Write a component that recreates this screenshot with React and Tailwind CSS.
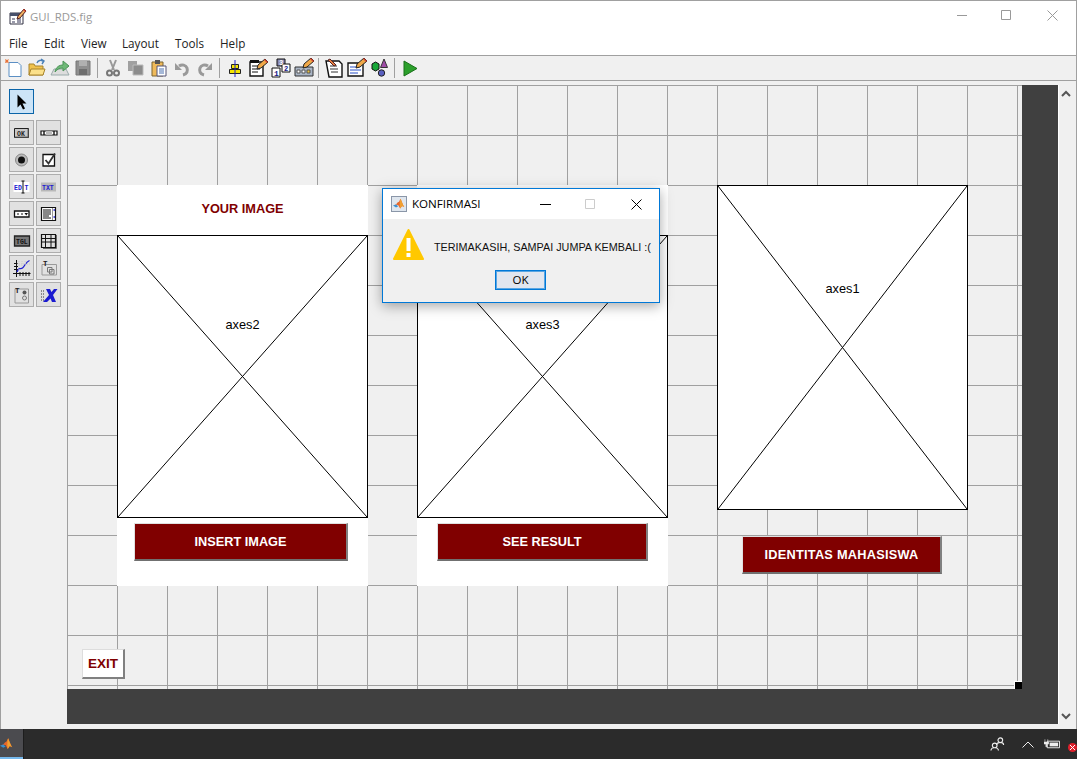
import React from 'react';

const ui = { fontFamily: '"Open Sans", sans-serif' };
const arial = { fontFamily: '"Liberation Sans", Arial, sans-serif' };
const mono = { fontFamily: '"Liberation Mono", monospace', fontWeight: 700 };

const menus = [
  { label: 'File', w: 'w-[35px]' },
  { label: 'Edit', w: 'w-[37px]' },
  { label: 'View', w: 'w-[41px]' },
  { label: 'Layout', w: 'w-[53px]' },
  { label: 'Tools', w: 'w-[45px]' },
  { label: 'Help', w: 'w-[30px]' },
];

function Ico({ children, size = 20, box = 20 }) {
  return (
    <svg width={size} height={size} viewBox={`0 0 ${box} ${box}`} className="block">
      {children}
    </svg>
  );
}

const Pencil = ({ x = 0, y = 0 }) => (
  <g transform={`translate(${x} ${y})`}>
    <path d="M0 10l1-4 7-6 3 3-7 6z" fill="#f0a848" stroke="#222" strokeWidth="1" />
    <path d="M7 1l3 3 1-1-3-3z" fill="#d04030" />
  </g>
);

const toolbar = [
  // new file
  <Ico key="new"><path d="M5 4.500h9l3 3v11H5z" fill="#fff" stroke="#5b8fc4" /><path d="M1 1l2 1 2-1-1 2 1 2-2-.6L1 5l.6-2z" fill="#e8743a" /></Ico>,
  // open
  <Ico key="open"><path d="M2 6h5l1 2h8v9H2z" fill="#f0c24e" stroke="#a8842c" /><path d="M2 17l2-6h14l-2 6z" fill="#fbe08a" stroke="#a8842c" /><path d="M10 5c1-3 4-3 6-2M14 1l3 2-2 3" fill="none" stroke="#4a80b8" strokeWidth="1.400" /></Ico>,
  // export
  <Ico key="export"><path d="M1 17l3-6h12l3 6z" fill="#ddd" stroke="#9aa" /><path d="M5 14c1-5 4-7 8-7V3l6 5-6 5V10c-3 0-6 1-8 4z" fill="#6fb878" stroke="#4d9558" /></Ico>,
  // save, greyed out
  <Ico key="save"><path d="M3 3h14v14H3z" fill="#8f8f8f" stroke="#777" /><path d="M6 3h8v5H6z" fill="#b0b0b0" /><path d="M6 11h8v6H6z" fill="#6e6e6e" /></Ico>,
  'sep',
  // cut
  <Ico key="cut"><path d="M7 2l4 10M13 2L9 12" stroke="#999" strokeWidth="2" /><circle cx="6.500" cy="15" r="2.500" fill="none" stroke="#777" strokeWidth="2" /><circle cx="13.500" cy="15" r="2.500" fill="none" stroke="#777" strokeWidth="2" /></Ico>,
  // copy
  <Ico key="copy"><path d="M2 3h9v10H2z" fill="#a0a0a0" /><path d="M7 7h10v10H7z" fill="#8c8c8c" stroke="#bbb" /></Ico>,
  // paste
  <Ico key="paste"><path d="M3 4h11v14H3z" fill="#efba5a" stroke="#7a6530" /><path d="M6 2h5v4H6z" fill="#555" /><path d="M8 8h9v10H8z" fill="#fff" stroke="#557" /><path d="M10 11h5M10 13h5M10 15h5" stroke="#4a70b0" /></Ico>,
  // undo
  <Ico key="undo"><path d="M11 17c4-1 5-4 4-7-1-3-5-4-8-2" fill="none" stroke="#999" strokeWidth="3" /><path d="M3 5v7h7z" fill="#999" /></Ico>,
  // redo
  <Ico key="redo"><path d="M9 17c-4-1-5-4-4-7 1-3 5-4 8-2" fill="none" stroke="#999" strokeWidth="3" /><path d="M17 5v7h-7z" fill="#999" /></Ico>,
  'sep',
  // align
  <Ico key="align"><path d="M6.500 6.500h7v4h-7zM4.500 11.500h11v4h-11z" fill="#f5e500" stroke="#222" /><path d="M10 2v17" stroke="#2222c8" /></Ico>,
  // menu editor
  <Ico key="menu"><path d="M2 4h13v14H2z" fill="#fff" stroke="#111" strokeWidth="1.400" /><path d="M2 2h9v3H2z" fill="#111" /><path d="M4 8h8M4 11h8M4 14h6" stroke="#111" /><Pencil x={9} y={1} /></Ico>,
  // tab order
  <Ico key="tab"><path d="M6 1h8v7H6z" fill="#8c8cb4" stroke="#111" /><path d="M1 10h8v9H1z" fill="#fff" stroke="#111" /><path d="M11 6h8v8h-8z" fill="#fff" stroke="#111" /><text x="8" y="7" fontSize="7" fill="#fff" style={mono}>3</text><text x="3" y="18" fontSize="8" fill="#1a1a8c" style={mono}>1</text><text x="13" y="13" fontSize="7" fill="#1a1a8c" style={mono}>2</text></Ico>,
  // toolbar editor
  <Ico key="tbar"><path d="M1 9h18v9H1z" fill="#a9b4c4" stroke="#333" /><path d="M3 12h3v3H3zM8 12h3v3H8z" fill="#fff" stroke="#555" /><path d="M13 12h3v3h-3z" fill="#e8c040" stroke="#555" /><Pencil x={9} y={0} /></Ico>,
  'sep',
  // m-file editor
  <Ico key="edit"><path d="M2 3h13l3 3v13H5z" fill="#fff" stroke="#111" strokeWidth="1.400" /><path d="M6 8h7M6 11h8M7 14h7" stroke="#333" /><path d="M4 2l6 6 2-1-6-6z" fill="#e88040" stroke="#522" /></Ico>,
  // property inspector
  <Ico key="prop"><path d="M1 5h15v13H1z" fill="#fff" stroke="#111" strokeWidth="1.400" /><path d="M3 9h9M3 12h11M3 15h8" stroke="#2a50c8" /><Pencil x={9} y={0} /></Ico>,
  // object browser
  <Ico key="obj"><path d="M2 6l3.500-2L9 6v5l-3.500 2L2 11z" fill="#18a838" stroke="#111" /><path d="M14 1l3.500 8.500h-7z" fill="#a04ca8" stroke="#333" /><circle cx="11.500" cy="15" r="3.200" fill="#5a60c0" stroke="#222" /></Ico>,
  'sep',
  // run
  <Ico key="run"><path d="M4 3l13 7.500L4 18z" fill="#2ca02c" stroke="#187018" /></Ico>,
];

const label = (txt, x, y, size, fill) => (
  <text x={x} y={y} fontSize={size} fill={fill} style={mono}>{txt}</text>
);

const palette = [
  <Ico key="ok"><path d="M2.500 5.500h14v9h-14z" fill="#c8c8c8" stroke="#222" /><path d="M3 14h13M16 6v8" stroke="#666" />{label('OK', 5, 12.500, 6.500, '#222')}</Ico>,
  <Ico key="slider"><path d="M2 8h16v4H2z" fill="#fff" stroke="#111" strokeWidth="1.200" /><path d="M7 8h6v4H7z" fill="#bbb" /><path d="M5 8v4M15 8v4" stroke="#111" strokeWidth="1.400" /></Ico>,
  <Ico key="radio"><circle cx="9.500" cy="10" r="6" fill="#bbb" stroke="#888" /><circle cx="9.500" cy="10" r="3.500" fill="#111" /></Ico>,
  <Ico key="check"><path d="M4 4.500h11.500V16H4z" fill="#fff" stroke="#111" strokeWidth="1.300" /><path d="M6.500 10l3 3.500L16 3.500" fill="none" stroke="#333" strokeWidth="1.800" /></Ico>,
  <Ico key="edit"><path d="M1.500 5h16v10h-16z" fill="#fff" />{label('ED', 2, 12.500, 6.500, '#2020d0')}{label('T', 12.500, 12.500, 6.500, '#2020d0')}<path d="M9.500 4h3M9.500 16h3M11 4v12" stroke="#111" /></Ico>,
  <Ico key="txt"><path d="M2 5.500h15v9H2z" fill="#b8b8b8" />{label('TXT', 3, 12.500, 6.500, '#2020d0')}</Ico>,
  <Ico key="popup"><path d="M2.500 7h14.500v6H2.500z" fill="#fff" stroke="#111" strokeWidth="1.300" /><path d="M5 10h2M9 10h2" stroke="#111" /><path d="M12.500 9h3.500l-1.700 2.500z" fill="#111" /></Ico>,
  <Ico key="list"><path d="M2.500 3.500h14v13h-14z" fill="#fff" stroke="#111" strokeWidth="1.200" /><path d="M4 6h8M4 8h8M4 10h8M4 12h6M4 14h8" stroke="#111" /><path d="M13.500 4v12" stroke="#999" /><path d="M14.500 6h1.500M14.500 13h1.500" stroke="#2020d0" strokeWidth="1.500" /></Ico>,
  <Ico key="tgl"><path d="M2.500 5h15v10h-15z" fill="#777" stroke="#222" strokeWidth="1.300" />{label('TGL', 4, 12.500, 6.500, '#111')}</Ico>,
  <Ico key="table"><path d="M2.500 3.500h14v13h-14z" fill="#e0e0e0" stroke="#111" strokeWidth="1.200" /><path d="M3 7.500h13M3 11h13M6.500 4v12M12 4v12" stroke="#111" /><path d="M17.500 4v13.500H4" fill="none" stroke="#666" /></Ico>,
  <Ico key="axes"><path d="M4.500 2v17M1 15.500h17.500M8 14v4M11 14v4M14 14v4M17 14v4M2 5.500h4M2 8.500h4M2 11.500h4" stroke="#111" strokeWidth="1" /><path d="M5 14c2-6 3-2 5.500-4s3-6 7-7.500" fill="none" stroke="#2020d0" strokeWidth="1.300" /><path d="M7 3v10M10 3v6M13 3v4M5 6h13" stroke="#ccc" strokeDasharray="1 1" /></Ico>,
  <Ico key="panel"><path d="M3 6.500h14.500V17H3z" fill="none" stroke="#999" />{label('T', 4, 7.500, 7.500, '#222')}<path d="M8.500 9.500h4.500V14H8.500zM10.500 11.500h4.500V16h-4.500z" fill="none" stroke="#777" /></Ico>,
  <Ico key="group"><path d="M3 4h13.500v14H3z" fill="none" stroke="#999" />{label('T', 3, 8, 7.500, '#222')}<circle cx="12.500" cy="7.500" r="2" fill="#555" /><circle cx="12.500" cy="13" r="2" fill="#ddd" stroke="#777" /></Ico>,
  <Ico key="activex"><path d="M2 6h4M2 9h3M2 12h3M2 15h3" stroke="#333" strokeDasharray="1 1" /><path d="M7 4h4l1.500 3L15 4h3.500l-4.500 6 3 7h-4l-1.500-3.500L8 17H4l6-7z" fill="#1a1ad0" /></Ico>,
];

function Axes({ name, labelTop, className }) {
  return (
    <div className={`relative border border-black bg-white ${className}`}>
      <svg className="block h-full w-full" viewBox="0 0 100 100" preserveAspectRatio="none">
        <path d="M0 0L100 100M100 0L0 100" stroke="#000" strokeWidth="1" vectorEffect="non-scaling-stroke" />
      </svg>
      <span className={`absolute left-0 right-0 text-center text-[12.75px] leading-4 text-black ${labelTop}`} style={arial}>{name}</span>
    </div>
  );
}

function MaroonButton({ children, className }) {
  return (
    <div
      className={`flex h-[38px] items-center justify-center border border-r-2 border-b-2 border-t-[#e0e0e0] border-l-[#e0e0e0] border-r-[#808080] border-b-[#707070] bg-[#800000] text-[12.75px] font-bold text-white ${className}`}
      style={arial}
    >
      {children}
    </div>
  );
}

function MatlabLogo({ size }) {
  return (
    <svg width={size} height={size} viewBox="0 0 16 16" className="block">
      <path d="M0 10l4-1.500L6 6l2-1 2-4c1 2 3 8 5 11l-3-1.500L9.500 14 7 9.500 5 9z" fill="#e8662a" />
      <path d="M0 10l4-1.500L7 11 4 12.500z" fill="#3a8fd0" />
      <path d="M10 1c-1 3-1.500 8-.5 13l2.500-3.500L15 12c-2-3-4-9-5-11z" fill="#f0a030" />
    </svg>
  );
}

export default function App() {
  return (
    <div className="flex h-[759px] w-[1077px] flex-col overflow-hidden bg-[#2b2b2b]" style={ui}>
      {/* Window */}
      <div className="flex h-[729px] flex-col border-x border-t border-[#a0a0a0] bg-[#f0f0f0]">
        {/* Title bar */}
        <div className="flex h-[29px] items-center bg-white pl-[8px]">
          <svg width="18" height="18" viewBox="0 0 18 18" className="block">
            <path d="M1 6h13v11H1z" fill="#fff" stroke="#334" />
            <path d="M1 6h13v3H1z" fill="#47506a" />
            <path d="M3 11h3v2H3zM3 14h3v2H3zM8 11h4v5H8z" fill="#99a" />
            <path d="M9 9l6-7 2 2-6 7-3 1z" fill="#f0b060" stroke="#522" />
            <path d="M14.500 2.500l2 2" stroke="#d04030" strokeWidth="1.500" />
          </svg>
          <span className="ml-[3px] pt-[2px] text-[11.4px] text-[#999]">GUI_RDS.fig</span>
          <div className="ml-auto flex items-center pr-[18px]">
            <svg width="11" height="11" viewBox="0 0 11 11" className="block"><path d="M1 5.500h10" stroke="#999" /></svg>
            <svg width="11" height="11" viewBox="0 0 11 11" className="ml-[34px] block"><path d="M.5.500h9v9h-9z" fill="none" stroke="#999" /></svg>
            <svg width="11" height="11" viewBox="0 0 11 11" className="ml-[35px] block"><path d="M.5.500l10 10M10.500.500l-10 10" stroke="#999" /></svg>
          </div>
        </div>
        {/* Menu bar */}
        <div className="flex h-[26px] items-center border-b border-[#a0a0a0] bg-white pl-[8px] pt-[2px] text-[11.7px] text-[#222]">
          {menus.map((m) => (
            <span key={m.label} className={m.w}>{m.label}</span>
          ))}
        </div>
        {/* Toolbar */}
        <div className="flex h-[25px] items-center border-b border-[#a0a0a0] pl-[1px]">
          {toolbar.map((item, i) =>
            item === 'sep' ? (
              <div key={i} className="mx-[3px] h-[20px] w-px bg-[#a0a0a0]" />
            ) : (
              <div key={i} className="flex w-[23px] justify-center">{item}</div>
            )
          )}
        </div>
        {/* Body */}
        <div className="flex flex-1 pt-[4px]">
          {/* Component palette */}
          <div className="w-[66px] pl-[8px] pt-[4px]">
            <div className="flex h-[25px] w-[25px] items-center justify-center border border-[#0a64a8] bg-[#cce4f7]">
              <svg width="18" height="18" viewBox="0 0 18 18" className="block"><path d="M4.500 1.500v13l3-3 2.500 5 2-1-2.500-5h4z" fill="#000" /></svg>
            </div>
            <div className="mt-[6px] grid grid-cols-[25px_25px] gap-x-[2px] gap-y-[2px]">
              {palette.map((icon, i) => (
                <div key={i} className="flex h-[25px] w-[25px] items-center justify-center border border-[#adadad] bg-[#e1e1e1]">
                  {icon}
                </div>
              ))}
            </div>
          </div>
          {/* Layout area */}
          <div className="flex w-[991px] flex-col bg-[#404040]">
            <div className="relative h-[604px] w-[955px] border-0 bg-[#f0f0f0] bg-[linear-gradient(#a0a0a0_1px,transparent_1px),linear-gradient(90deg,#a0a0a0_1px,transparent_1px)] bg-[size:50px_50px]">
              {/* Left panel */}
              <div className="absolute left-[50px] top-[100px] flex h-[401px] w-[251px] flex-col bg-white">
                <div className="flex h-[50px] items-center justify-center pb-[2px] text-[12.75px] font-bold text-[#800000]" style={arial}>YOUR IMAGE</div>
                <Axes name="axes2" labelTop="top-[81px]" className="h-[283px] w-[251px]" />
                <MaroonButton className="ml-[17px] mt-[5px] w-[214px]">INSERT IMAGE</MaroonButton>
              </div>
              {/* Middle panel */}
              <div className="absolute left-[350px] top-[100px] flex h-[401px] w-[251px] flex-col bg-white">
                <div className="h-[50px]" />
                <Axes name="axes3" labelTop="top-[81px]" className="h-[283px] w-[251px]" />
                <MaroonButton className="ml-[20px] mt-[5px] w-[211px]">SEE RESULT</MaroonButton>
              </div>
              {/* Right column */}
              <Axes name="axes1" labelTop="top-[95px]" className="absolute left-[650px] top-[100px] h-[325px] w-[251px]" />
              <MaroonButton className="absolute left-[675px] top-[451px] w-[200px] tracking-[0.25px]">IDENTITAS MAHASISWA</MaroonButton>
              {/* Exit */}
              <div
                className="absolute left-[15px] top-[564px] flex h-[30px] w-[43px] items-center justify-center border border-r-2 border-b-2 border-t-[#ddd] border-l-[#ddd] border-r-[#808080] border-b-[#808080] bg-white pt-[1px] text-[13.5px] font-bold text-[#800000]"
                style={arial}
              >
                EXIT
              </div>
              {/* Resize handle */}
              <div className="absolute bottom-0 right-0 h-[8px] w-[8px] border-l border-t border-white bg-black" />
              {/* Dialog */}
              <div className="absolute left-[315px] top-[103px] h-[115px] w-[278px] border border-[#0078d7] bg-[#f0f0f0] shadow-[0_3px_12px_rgba(0,0,0,0.35)]" style={arial}>
                <div className="flex h-[30px] items-center bg-white pl-[8px]">
                  <div className="flex h-[16px] w-[16px] items-center justify-center border border-[#8a96a8] bg-[#dfe6ee]">
                    <MatlabLogo size={12} />
                  </div>
                  <span className="ml-[5px] text-[11.6px] text-black" style={ui}>KONFIRMASI</span>
                  <div className="ml-auto flex items-center pr-[17px]">
                    <svg width="11" height="11" viewBox="0 0 11 11" className="block"><path d="M0 5.500h11" stroke="#000" /></svg>
                    <svg width="11" height="11" viewBox="0 0 11 11" className="ml-[34px] block"><path d="M.5.500h9v9h-9z" fill="none" stroke="#ccc" /></svg>
                    <svg width="11" height="11" viewBox="0 0 11 11" className="ml-[35px] block"><path d="M.5.500l10 10M10.500.500l-10 10" stroke="#000" /></svg>
                  </div>
                </div>
                <div className="flex items-center pl-[9px] pt-[9px]">
                  <svg width="33" height="33" viewBox="0 0 33 33" className="block">
                    <path d="M16.500 2L31 31H2z" fill="#ffc800" stroke="#ffc800" strokeWidth="2" strokeLinejoin="round" />
                    <path d="M14.500 10h4v13h-4zM14.500 25h4v4h-4z" fill="#fff" />
                  </svg>
                  <span className="ml-[9px] mt-[5px] text-[10.8px] text-[#111]" style={arial}>TERIMAKASIH, SAMPAI JUMPA KEMBALI :(</span>
                </div>
                <div className="mt-[9px] flex justify-center pr-[1px]">
                  <div className="flex h-[20px] w-[51px] items-center justify-center border border-[#0078d7] bg-[#e1e6ef] text-[11.5px] text-black shadow-[inset_0_0_0_1px_#5aa5e2]" style={ui}>OK</div>
                </div>
              </div>
            </div>
          </div>
          {/* Scrollbar */}
          <div className="flex flex-1 flex-col items-center justify-between border-l border-white pb-[4px] pr-[3px] pt-[5px]">
            <svg width="10" height="8" viewBox="0 0 10 8" className="block"><path d="M1 6l4-4 4 4" fill="none" stroke="#555" strokeWidth="2" /></svg>
            <svg width="10" height="8" viewBox="0 0 10 8" className="block"><path d="M1 2l4 4 4-4" fill="none" stroke="#555" strokeWidth="2" /></svg>
          </div>
        </div>
        <div className="h-[5px] shrink-0" />
      </div>
      {/* Taskbar */}
      <div className="flex h-[30px] items-center bg-[#2b2b2b]">
        <div className="relative flex h-full w-[24px] items-center border-r border-[#1d1d1d] bg-[#4b4b4f] pr-[10px]">
          <MatlabLogo size={14} />
          <div className="absolute bottom-0 left-0 right-0 h-[2px] bg-[#76b9ed]" />
        </div>
        <div className="ml-auto flex items-center">
          <svg width="15" height="16" viewBox="0 0 16 16" className="block">
            <circle cx="11" cy="4" r="2.500" fill="none" stroke="#eee" strokeWidth="1.200" />
            <path d="M7 9c0-2 2-2.500 3-2.500M12 6.500c1 0 2.500.5 2.500 2.500" fill="none" stroke="#eee" strokeWidth="1.200" />
            <circle cx="5" cy="9.500" r="2.500" fill="none" stroke="#eee" strokeWidth="1.200" />
            <path d="M1 15c0-2 2-3 3-3M6 12c1 0 3 1 3 3" fill="none" stroke="#eee" strokeWidth="1.200" />
          </svg>
          <svg width="12" height="7" viewBox="0 0 12 7" className="ml-[17px] block"><path d="M.5 6.500l5.500-5.500 5.500 5.500" fill="none" stroke="#eee" /></svg>
          <svg width="16" height="12" viewBox="0 0 17 12" className="ml-[10px] block">
            <path d="M3.500 3h13v7h-13z" fill="none" stroke="#eee" />
            <path d="M6 4.500h9v4H6z" fill="#eee" />
            <path d="M1 1v3M4 1v3M0 4h5v2H3v3H2V6H0z" fill="#eee" stroke="#eee" strokeWidth=".6" />
          </svg>
          <div className="ml-[8px] mt-[7px] flex h-[9px] w-[9px] items-center justify-center rounded-full bg-[#e0202c]">
            <svg width="5" height="5" viewBox="0 0 5 5" className="block"><path d="M0 0l5 5M5 0L0 5" stroke="#fff" /></svg>
          </div>
        </div>
      </div>
    </div>
  );
}
